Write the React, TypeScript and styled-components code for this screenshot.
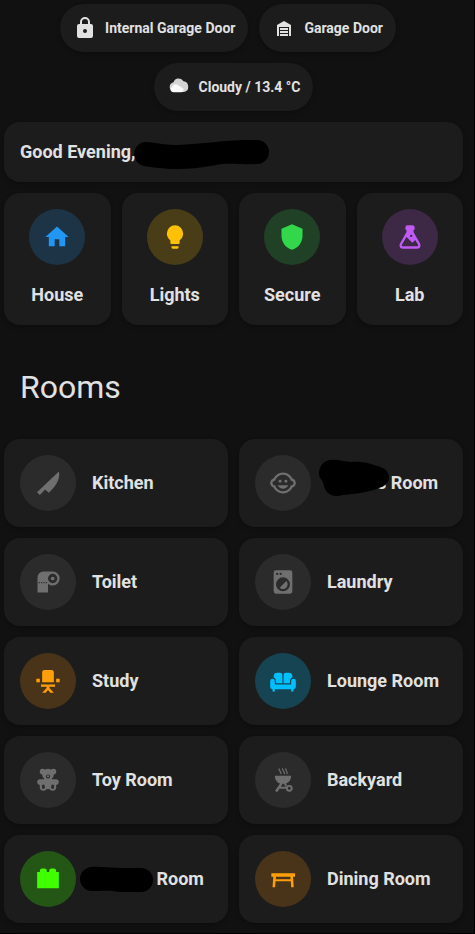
import React from "react";
import styled, { createGlobalStyle } from "styled-components";

const GlobalStyle = createGlobalStyle`
  *, *::before, *::after { box-sizing: border-box; }
  body {
    margin: 0;
    background: #111111;
    color: #e1e1e1;
    font-family: Roboto, "Liberation Sans", sans-serif;
  }
`;

const Page = styled.main`
  display: flex;
  flex-direction: column;
  gap: 11px;
  min-height: 100vh;
  padding: 4px 11px 10px 4px;
  border-right: 1px solid #000000;
  border-bottom: 1px solid #000000;
`;

const ChipRow = styled.div<{ $trailing: number }>`
  display: flex;
  flex-wrap: wrap;
  justify-content: center;
  gap: 11px;
  padding-right: ${(p) => p.$trailing}px;
`;

const Chip = styled.button`
  display: flex;
  align-items: center;
  gap: 8px;
  height: 48px;
  padding: 0 13px;
  border: 0;
  border-radius: 24px;
  background: #1c1c1c;
  color: inherit;
  font: bold 14px/24px Roboto, "Liberation Sans", sans-serif;
  box-shadow: 0 2px 4px rgba(0, 0, 0, 0.25);
  cursor: pointer;
`;

const cardBase = `
  border: 0;
  border-radius: 16px;
  background: #1c1c1c;
  color: inherit;
  box-shadow: 0 2px 4px rgba(0, 0, 0, 0.25);
`;

const Greeting = styled.section`
  ${cardBase}
  padding: 16px;
`;

const Label = styled.span`
  font: bold 18px/28px Roboto, "Liberation Sans", sans-serif;
  white-space: nowrap;
`;

const TileGrid = styled.div`
  display: grid;
  grid-template-columns: repeat(4, 1fr);
  gap: 11px;
`;

const Tile = styled.button`
  ${cardBase}
  display: flex;
  flex-direction: column;
  align-items: center;
  gap: 16px;
  padding: 16px 0;
  cursor: pointer;
`;

const Heading = styled.h1`
  margin: 31px 0 21px;
  padding: 0 16px;
  font: 400 32px/40px Roboto, "Liberation Sans", sans-serif;
`;

const RoomGrid = styled.div`
  display: grid;
  grid-template-columns: repeat(2, 1fr);
  gap: 11px;
`;

const RoomCard = styled.button`
  ${cardBase}
  display: flex;
  align-items: center;
  gap: 16px;
  padding: 16px;
  text-align: left;
  cursor: pointer;
`;

const RoomLabel = styled(Label)`
  position: relative;
`;

const Badge = styled.span<{ $fg: string; $bg: string }>`
  display: grid;
  flex: none;
  place-items: center;
  width: 56px;
  height: 56px;
  border-radius: 50%;
  color: ${(p) => p.$fg};
  background: ${(p) => p.$bg};
`;

const Glyph = styled.svg<{ $size: number }>`
  display: block;
  flex: none;
  width: ${(p) => p.$size}px;
  height: ${(p) => p.$size}px;
  fill: currentColor;
`;

const Hidden = styled.span<{ $width: number }>`
  display: inline-block;
  width: ${(p) => p.$width}px;
  height: 28px;
  vertical-align: top;
`;

const Scribble = styled.svg<{ $left: number }>`
  position: absolute;
  top: 0;
  left: ${(p) => p.$left}px;
  height: 28px;
  overflow: visible;
  fill: #000000;
`;

type Name =
  | "home" | "bulb" | "shield" | "flask" | "knife" | "roll" | "child" | "washer"
  | "chair" | "sofa" | "bear" | "grill" | "brick" | "table" | "lock" | "garage" | "cloud";

const icons: Record<Name, React.ReactNode> = {
  home: <path d="M10,20V14H14V20H19V12H22L12,3L2,12H5V20H10Z" />,
  bulb: <path d="M12,2A7,7 0 0,0 5,9C5,11.38 6.19,13.47 8,14.74V17A1,1 0 0,0 9,18H15A1,1 0 0,0 16,17V14.74C17.81,13.47 19,11.38 19,9A7,7 0 0,0 12,2M9,21A1,1 0 0,0 10,22H14A1,1 0 0,0 15,21V20H9V21Z" />,
  shield: <path d="M12,1L3,5V11C3,16.55 6.84,21.74 12,23C17.16,21.74 21,16.55 21,11V5L12,1Z" />,
  flask: <path d="M6,22A3,3 0 0,1 3,19C3,18.4 3.18,17.84 3.5,17.37L9,7.81V6A1,1 0 0,1 8,5V4A2,2 0 0,1 10,2H14A2,2 0 0,1 16,4V5A1,1 0 0,1 15,6V7.81L20.5,17.37C20.82,17.84 21,18.4 21,19A3,3 0 0,1 18,22H6M5,19A1,1 0 0,0 6,20H18A1,1 0 0,0 19,19C19,18.79 18.93,18.59 18.82,18.43L16.53,14.47L14,17L8.93,11.93L5.18,18.43C5.07,18.59 5,18.79 5,19M13,10A1,1 0 0,0 12,11A1,1 0 0,0 13,12A1,1 0 0,0 14,11A1,1 0 0,0 13,10Z" />,
  knife: <path d="M21.3,2.2L2.6,19.9L5,22.3L9.6,17.6L12.6,20.3C17.5,16.6 23.2,8.4 21.3,2.2Z" />,
  roll: (
    <>
      <path fillRule="evenodd" d="M8,3H16A6,6 0 0,1 16,15C14.4,15 13,14.4 12,13.4V21H3V8A5,5 0 0,1 8,3M16,5A4,4 0 0,0 16,13A4,4 0 0,0 16,5M4,12V13H5V12M6,12V13H7V12M8,12V13H9V12M10,12V13H11V12" />
      <circle cx="16" cy="9" r="1.6" />
    </>
  ),
  child: (
    <>
      <path fillRule="evenodd" d="M22.94 12.66c.04-.21.06-.43.06-.66s-.02-.45-.06-.66c-.25-1.51-1.36-2.74-2.81-3.17-.53-1.12-1.28-2.1-2.19-2.91C16.36 3.85 14.28 3 12 3s-4.36.85-5.94 2.26c-.92.81-1.67 1.8-2.19 2.91-1.45.43-2.56 1.65-2.81 3.17-.04.21-.06.43-.06.66s.02.45.06.66c.25 1.51 1.36 2.74 2.81 3.17.52 1.11 1.27 2.09 2.17 2.89C7.62 20.14 9.71 21 12 21s4.38-.86 5.97-2.28c.9-.8 1.65-1.79 2.17-2.89 1.44-.43 2.55-1.65 2.8-3.17zM19 14c-.1 0-.19-.02-.29-.03-.2.67-.49 1.29-.86 1.86C16.6 17.74 14.45 19 12 19s-4.6-1.26-5.85-3.17c-.37-.57-.66-1.19-.86-1.86-.1.01-.19.03-.29.03-1.1 0-2-.9-2-2s.9-2 2-2c.1 0 .19.02.29.03.2-.67.49-1.29.86-1.86C7.4 6.26 9.55 5 12 5s4.6 1.26 5.85 3.17c.37.57.66 1.19.86 1.86.1-.01.19-.03.29-.03 1.1 0 2 .9 2 2s-.9 2-2 2z" />
      <path d="M7.5 14c.76 1.77 2.49 3 4.5 3s3.74-1.23 4.5-3h-9z" />
      <circle cx="9.5" cy="10.5" r="1.25" />
      <circle cx="14.5" cy="10.5" r="1.25" />
    </>
  ),
  washer: <path d="M14.83,11.17C16.39,12.73 16.39,15.27 14.83,16.83C13.27,18.39 10.73,18.39 9.17,16.83L14.83,11.17M6,2H18A2,2 0 0,1 20,4V20A2,2 0 0,1 18,22H6A2,2 0 0,1 4,20V4A2,2 0 0,1 6,2M7,4A1,1 0 0,0 6,5A1,1 0 0,0 7,6A1,1 0 0,0 8,5A1,1 0 0,0 7,4M10,4A1,1 0 0,0 9,5A1,1 0 0,0 10,6A1,1 0 0,0 11,5A1,1 0 0,0 10,4M12,8A6,6 0 0,0 6,14A6,6 0 0,0 12,20A6,6 0 0,0 18,14A6,6 0 0,0 12,8Z" />,
  chair: <path d="M9,2.5H15A2,2 0 0,1 17,4.5V13H7V4.5A2,2 0 0,1 9,2.5M2,10H5V13H2ZM19,10H22V13H19ZM6,15H18V17H13.2V18L17,22H14L12,19.8L10,22H7L10.8,18V17H6Z" />,
  sofa: <path d="M7,5H9.5A2,2 0 0,1 11.5,7V14H6V12C6,10.6 5.2,9.5 4,9V8A3,3 0 0,1 7,5M17,5H14.5A2,2 0 0,0 12.5,7V14H18V12C18,10.6 18.8,9.5 20,9V8A3,3 0 0,0 17,5M3,10A2,2 0 0,1 5,12V15H19V12A2,2 0 0,1 23,12V17A2,2 0 0,1 21,19V21H19V19H5V21H3V19A2,2 0 0,1 1,17V12A2,2 0 0,1 3,10" />,
  bear: (
    <>
      <circle cx="7.4" cy="4.8" r="2.5" />
      <circle cx="16.6" cy="4.8" r="2.5" />
      <ellipse cx="12" cy="7.2" rx="5" ry="4.8" />
      <rect x="2.8" y="11.4" width="18.4" height="4.8" rx="2.4" />
      <ellipse cx="12" cy="15" rx="5" ry="5" />
      <ellipse cx="8" cy="17.6" rx="3.1" ry="3.7" />
      <ellipse cx="16" cy="17.6" rx="3.1" ry="3.7" />
      <g fill="#2b2b2b">
        <ellipse cx="8" cy="17.8" rx="1.3" ry="1.9" />
        <ellipse cx="16" cy="17.8" rx="1.3" ry="1.9" />
        <circle cx="12" cy="9" r="1.8" />
      </g>
      <ellipse cx="12" cy="8.8" rx="1" ry=".8" />
    </>
  ),
  grill: (
    <>
      <path d="M5,8.3H19C19,11.8 17,14.3 14.4,15L15.4,16.6L14.1,17.7L12.8,15.3H11.6L10.2,17.8H15V19.6H9L6.9,22.4L5.2,21.3L9.5,15C7,14.2 5,11.8 5,8.3Z" />
      <g fill="none" stroke="currentColor">
        <circle cx="17.4" cy="19.1" r="2.1" strokeWidth="1.6" />
        <path strokeWidth="1" d="M8.5,2C8.7,4.3 10.2,4.5 10.4,7M11.5,2C11.7,4.3 13.2,4.5 13.4,7M14.3,2C14.5,4.3 15.5,4.5 15.7,7" />
      </g>
    </>
  ),
  brick: <path d="M19,6V5A2,2 0 0,0 17,3H15A2,2 0 0,0 13,5V6H11V5A2,2 0 0,0 9,3H7A2,2 0 0,0 5,5V6H2.7V20H21.3V6Z" />,
  table: <path fillRule="evenodd" d="M2,7H22.3V10H20.6L21.2,19H19L18.7,14H5.6L5.2,19H3L3.7,10H2ZM6,10L5.8,12.3H18.5L18.3,10Z" />,
  lock: <path d="M12,17A2,2 0 0,0 14,15C14,13.89 13.1,13 12,13A2,2 0 0,0 10,15A2,2 0 0,0 12,17M18,8A2,2 0 0,1 20,10V20A2,2 0 0,1 18,22H6A2,2 0 0,1 4,20V10C4,8.89 4.9,8 6,8H7V6A5,5 0 0,1 12,1A5,5 0 0,1 17,6V8H18M12,3A3,3 0 0,0 9,6V8H15V6A3,3 0 0,0 12,3Z" />,
  garage: <path d="M19,20H17V11H7V20H5V9L12,5L19,9V20M8,12H16V14H8V12M8,15H16V17H8V15M16,18V20H8V18H16Z" />,
  cloud: (
    <>
      <path fill="#d4d4d4" d="M7,17A5,5 0 0,1 6.5,7.2A5.5,5.5 0 0,1 16.5,6.2A5.5,5.5 0 0,1 17,17Z" />
      <path fill="#f9f9f9" d="M6.5,17.2A2.8,2.8 0 0,1 5,12A4,4 0 0,1 12,10.9A2.6,2.6 0 0,1 14.7,12.5A2.4,2.4 0 0,1 14.5,17.2Z" />
    </>
  ),
};

const Icon = ({ name, size = 28 }: { name: Name; size?: number }) => (
  <Glyph viewBox="0 0 24 24" $size={size} aria-hidden="true">
    {icons[name]}
  </Glyph>
);

const Cover = ({ left, width, d }: { left: number; width: number; d: string }) => (
  <Scribble $left={left} width={width} viewBox={`0 0 ${width} 28`} aria-hidden="true">
    <path d={d} />
  </Scribble>
);

const grey = { fg: "#6f6f6f", bg: "#2b2b2b" };
const orange = { fg: "#ff9f0a", bg: "#493419" };

const chipRows: { trailing: number; chips: { icon: Name; text: string }[] }[] = [
  {
    trailing: 11,
    chips: [
      { icon: "lock", text: "Internal Garage Door" },
      { icon: "garage", text: "Garage Door" },
    ],
  },
  { trailing: 0, chips: [{ icon: "cloud", text: "Cloudy / 13.4 °C" }] },
];

const tiles: { icon: Name; text: string; fg: string; bg: string }[] = [
  { icon: "home", text: "House", fg: "#2196f3", bg: "#1d3447" },
  { icon: "bulb", text: "Lights", fg: "#ffc107", bg: "#493d18" },
  { icon: "shield", text: "Secure", fg: "#32d74b", bg: "#204126" },
  { icon: "flask", text: "Lab", fg: "#bf5af2", bg: "#3d2846" },
];

const rooms: { icon: Name; text: React.ReactNode; fg: string; bg: string }[] = [
  { icon: "knife", text: "Kitchen", ...grey },
  {
    icon: "child",
    text: (
      <>
        <Hidden $width={50} />s Room
        <Cover left={-8} width={70} d="M12,-9C18,-10 24,-7 32,-7C44,-8 52,-5 58,-3C65,-2 70,3 70,8C70,14 66,17 60,19C50,23 36,25 24,26C14,29 7,25 5,17C5,14 3,12 1,9C-2,1 3,-9 12,-9Z" />
      </>
    ),
    ...grey,
  },
  { icon: "roll", text: "Toilet", ...grey },
  { icon: "washer", text: "Laundry", ...grey },
  { icon: "chair", text: "Study", ...orange },
  { icon: "sofa", text: "Lounge Room", fg: "#00bfff", bg: "#174453" },
  { icon: "bear", text: "Toy Room", ...grey },
  { icon: "grill", text: "Backyard", ...grey },
  {
    icon: "brick",
    text: (
      <>
        <Hidden $width={60} /> Room
        <Cover left={-12} width={73} d="M12,2C20,1 32,3 42,3H61A12,12 0 0,1 61,27H40C30,25 20,26 12,26A12,12 0 0,1 12,2Z" />
      </>
    ),
    fg: "#40ff00",
    bg: "#245616",
  },
  { icon: "table", text: "Dining Room", ...orange },
];

export default function App() {
  return (
    <>
      <GlobalStyle />
      <Page>
        {chipRows.map((row) => (
          <ChipRow key={row.chips[0].text} $trailing={row.trailing}>
            {row.chips.map((c) => (
              <Chip key={c.text} type="button">
                <Icon name={c.icon} size={24} />
                {c.text}
              </Chip>
            ))}
          </ChipRow>
        ))}
        <Greeting>
          <RoomLabel>
            Good Evening,
            <Cover left={114} width={135} d="M11,1C20,1 28,4 42,4C70,3 90,-1 112,-1H123A12,12 0 0,1 123,23C112,24 100,22 88,23C74,25 64,28 44,28C28,28 18,26 10,25C-3,22 -3,3 11,1Z" />
          </RoomLabel>
        </Greeting>
        <TileGrid>
          {tiles.map((t) => (
            <Tile key={t.text} type="button">
              <Badge $fg={t.fg} $bg={t.bg}>
                <Icon name={t.icon} />
              </Badge>
              <Label>{t.text}</Label>
            </Tile>
          ))}
        </TileGrid>
        <Heading>Rooms</Heading>
        <RoomGrid>
          {rooms.map((r) => (
            <RoomCard key={r.icon} type="button">
              <Badge $fg={r.fg} $bg={r.bg}>
                <Icon name={r.icon} />
              </Badge>
              <RoomLabel>{r.text}</RoomLabel>
            </RoomCard>
          ))}
        </RoomGrid>
      </Page>
    </>
  );
}
